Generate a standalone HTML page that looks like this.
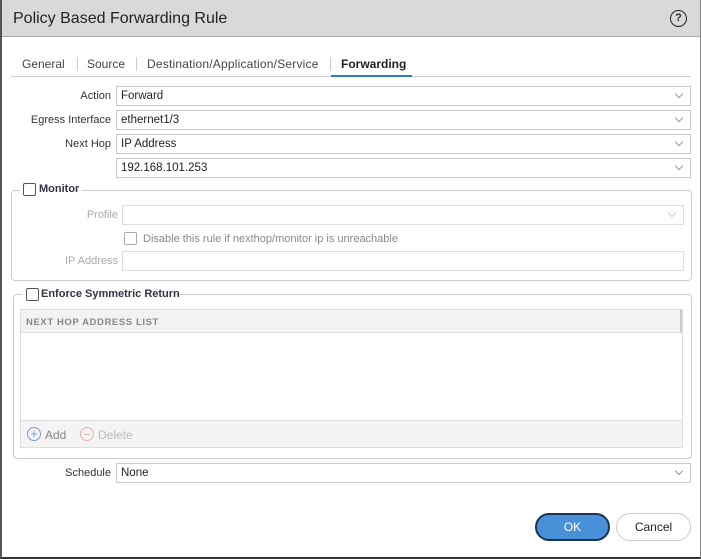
<!DOCTYPE html>
<html><head><style>
*{box-sizing:border-box;margin:0;padding:0}
body{width:701px;height:559px;background:#fff;font-family:"Liberation Sans",sans-serif;font-size:11px;color:#222;position:relative;overflow:hidden}
.frame{position:absolute;left:0;top:0;width:701px;height:559px;border-left:2px solid #555;border-right:1px solid #888;border-bottom:2px solid #333}
.title{position:absolute;left:2px;top:0;right:1px;height:37px;background:#d9d9d9;border-bottom:1px solid #aaa}
.title span{position:absolute;left:11px;top:10px;font-size:16px;color:#222}
.help{position:absolute;left:670px;top:10px;width:17px;height:17px;border:1.5px solid #222;border-radius:50%;font-size:11px;font-weight:bold;text-align:center;line-height:14px}
.abs{position:absolute}
.tab{position:absolute;top:57px;font-size:12px;color:#444}
.sep{position:absolute;top:57px;width:1px;height:14px;background:#ccc}
.lbl{position:absolute;text-align:right;font-size:11px;color:#333}
.in{position:absolute;border:1px solid #c9c9c9;background:#fff;height:20px;padding-left:4px;line-height:18px;font-size:11.5px;color:#222}
.chev{position:absolute;right:8px;top:4px;width:6px;height:6px;border-right:1px solid #999;border-bottom:1px solid #999;transform:rotate(45deg)}
.fs{position:absolute;border:1px solid #ccc;border-radius:4px}
.cb{position:absolute;width:13px;height:13px;border:1px solid #555;border-radius:2px;background:#fff}
.dis{color:#aaa}
</style></head><body>
<div class="frame"></div>
<div class="title"><span>Policy Based Forwarding Rule</span></div>
<div class="help">?</div>

<div class="tab" style="left:22px">General</div>
<div class="sep" style="left:77px"></div>
<div class="tab" style="left:87px">Source</div>
<div class="sep" style="left:136px"></div>
<div class="tab" style="left:147px;letter-spacing:0.2px">Destination/Application/Service</div>
<div class="sep" style="left:330px"></div>
<div class="tab" style="left:341px;font-weight:bold;color:#222">Forwarding</div>
<div class="abs" style="left:11px;top:76px;width:680px;height:1px;background:#ccc"></div>
<div class="abs" style="left:331px;top:75px;width:81px;height:2px;background:#2d7bd0"></div>

<div class="lbl" style="left:20px;width:91px;top:90px">Action</div>
<div class="in" style="left:116px;top:86px;width:575px">Forward<div class="chev"></div></div>
<div class="lbl" style="left:20px;width:91px;top:114px">Egress Interface</div>
<div class="in" style="left:116px;top:110px;width:575px">ethernet1/3<div class="chev"></div></div>
<div class="lbl" style="left:20px;width:91px;top:138px">Next Hop</div>
<div class="in" style="left:116px;top:134px;width:575px">IP Address<div class="chev"></div></div>
<div class="in" style="left:116px;top:158px;width:575px">192.168.101.253<div class="chev"></div></div>

<div class="fs" style="left:11px;top:190px;width:681px;height:91px"></div>
<div class="abs" style="left:20px;top:183px;width:62px;height:14px;background:#fff"></div>
<div class="cb" style="left:23px;top:183px"></div>
<div class="abs" style="left:39px;top:183px;font-weight:bold;color:#334;font-size:11px">Monitor</div>
<div class="lbl dis" style="left:20px;width:98px;top:209px">Profile</div>
<div class="in" style="left:122px;top:205px;width:562px;border-color:#ddd"><div class="chev" style="border-color:#ccc"></div></div>
<div class="cb" style="left:124px;top:232px;border-color:#aaa"></div>
<div class="abs dis" style="left:143px;top:233px;color:#888">Disable this rule if nexthop/monitor ip is unreachable</div>
<div class="lbl dis" style="left:20px;width:98px;top:255px">IP Address</div>
<div class="in" style="left:122px;top:251px;width:562px;border-color:#ddd"></div>

<div class="fs" style="left:13px;top:294px;width:679px;height:165px"></div>
<div class="abs" style="left:22px;top:287px;width:154px;height:14px;background:#fff"></div>
<div class="cb" style="left:26px;top:288px"></div>
<div class="abs" style="left:41px;top:288px;font-weight:bold;color:#334">Enforce Symmetric Return</div>
<div class="abs" style="left:20px;top:309px;width:663px;height:139px;border:1px solid #ddd;background:#fff"></div>
<div class="abs" style="left:21px;top:310px;width:661px;height:23px;background:#f2f2f2;border-bottom:1px solid #ddd;border-right:2px solid #ccc"></div>
<div class="abs" style="left:26px;top:317px;font-size:9.5px;letter-spacing:.6px;color:#888;font-weight:bold">NEXT HOP ADDRESS LIST</div>
<div class="abs" style="left:21px;top:420px;width:661px;height:27px;background:#f4f4f4;border-top:1px solid #ddd"></div>
<div class="abs" style="left:27px;top:427px;width:14px;height:14px;border:1px solid #7a9cc6;border-radius:50%;color:#7a9cc6;font-size:13px;line-height:11px;text-align:center">+</div>
<div class="abs" style="left:45px;top:428px;font-size:12px;color:#888">Add</div>
<div class="abs" style="left:80px;top:427px;width:14px;height:14px;border:1px solid #e8b0b0;border-radius:50%"><div style="position:absolute;left:3px;top:6px;width:6px;height:1px;background:#e8b0b0"></div></div>
<div class="abs" style="left:98px;top:428px;font-size:12px;color:#bbb">Delete</div>

<div class="lbl" style="left:20px;width:91px;top:467px">Schedule</div>
<div class="in" style="left:116px;top:463px;width:575px">None<div class="chev"></div></div>

<div class="abs" style="left:535px;top:513px;width:75px;height:28px;border-radius:14px;background:#4a90d9;border:2px solid #1b3550;color:#fff;text-align:center;line-height:24px;font-size:12px">OK</div>
<div class="abs" style="left:616px;top:513px;width:75px;height:28px;border-radius:14px;background:#fff;border:1px solid #ccc;color:#222;text-align:center;line-height:26px;font-size:12px">Cancel</div>
</body></html>
